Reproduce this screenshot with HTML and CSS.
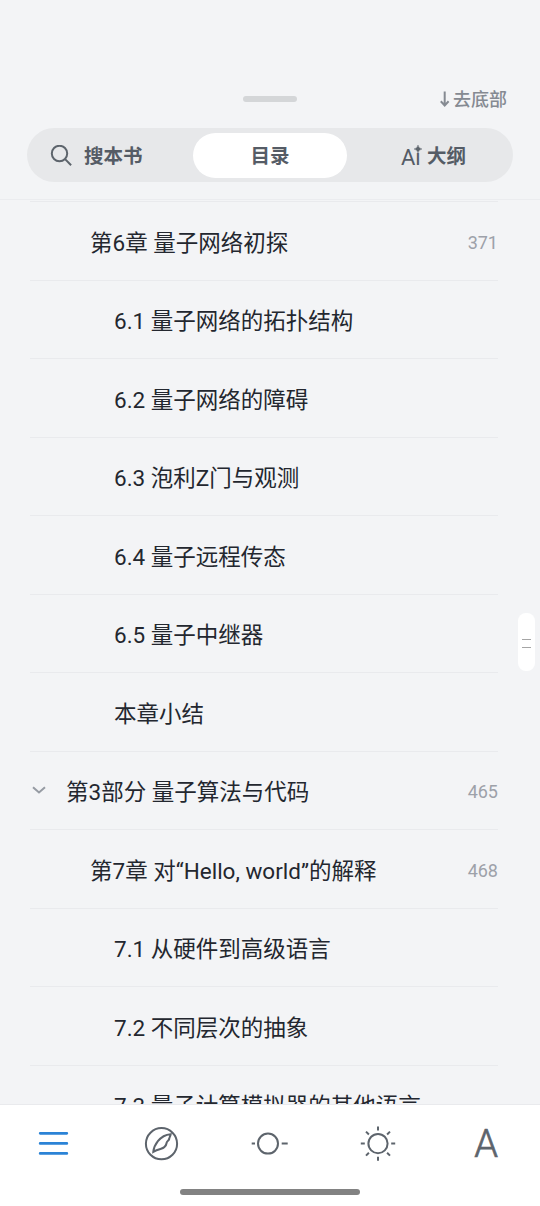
FILE: index.html
```html
<!DOCTYPE html>
<html lang="zh-CN">
<head>
<meta charset="utf-8">
<title>目录</title>
<link rel="stylesheet" href="styles.css">
</head>
<body>
<div class="screen">
  <header class="header">
    <div class="top">
      <span></span>
      <span class="grabber"></span>
      <a class="to-bottom"><svg width="12" height="18" viewBox="0 0 12 18"><path d="M5.7 .5V14M1.8 10.3l3.9 4.2 3.9-4.2"/></svg>去底部</a>
    </div>
    <nav class="tabs">
      <div class="tab tab-search"><svg class="search" width="24" height="24" viewBox="0 0 24 24"><circle cx="10.5" cy="8.5" r="7.7"/><path d="M16.1 14.1l6 6.2"/></svg><span>搜本书</span></div>
      <div class="tab active"><span>目录</span></div>
      <div class="tab tab-outline"><span class="ai">Aı<svg class="spark" width="8" height="8" viewBox="0 0 8 8"><path d="M4 0Q4.6 3.4 8 4Q4.6 4.6 4 8Q3.4 4.6 0 4Q3.4 3.4 4 0Z"/></svg></span><span>大纲</span></div>
    </nav>
  </header>
  <main class="toc">
    <div class="row chapter"><span>第6章 量子网络初探</span><span class="page">371</span></div>
    <div class="row section"><span>6.1 量子网络的拓扑结构</span></div>
    <div class="row section"><span>6.2 量子网络的障碍</span></div>
    <div class="row section"><span>6.3 泡利Z门与观测</span></div>
    <div class="row section"><span>6.4 量子远程传态</span></div>
    <div class="row section"><span>6.5 量子中继器</span></div>
    <div class="row section"><span>本章小结</span></div>
    <div class="row part"><svg class="chevron" width="18" height="12" viewBox="0 0 18 12"><path d="M3 1.2l6 5.3 6-5.3"/></svg><span>第3部分 量子算法与代码</span><span class="page">465</span></div>
    <div class="row chapter"><span>第7章 对“Hello, world”的解释</span><span class="page">468</span></div>
    <div class="row section"><span>7.1 从硬件到高级语言</span></div>
    <div class="row section"><span>7.2 不同层次的抽象</span></div>
    <div class="row section"><span>7.3 量子计算模拟器的其他语言</span></div>
  </main>
  <div class="scroll-thumb"></div>
  <footer class="footer">
    <nav class="tools">
      <div class="tool"><svg class="menu" width="40" height="40" viewBox="0 0 40 40"><path d="M6.2 9.3h26.6M6.2 19.4h26.6M6.2 29.4h26.6"/></svg></div>
      <div class="tool"><svg width="40" height="40" viewBox="0 0 40 40"><circle cx="19.5" cy="19.7" r="15.6"/><path d="M11.3 27.8C11.8 22 17.2 11 28.7 10.2C28.4 12.5 27.2 13.4 27.2 15C26.8 16.8 24.8 16.8 24.6 19C24.3 21 23.8 21.8 22.4 23C20.5 25.3 17 24.3 11.3 27.8Z"/></svg></div>
      <div class="tool"><svg width="40" height="40" viewBox="0 0 40 40"><circle cx="18" cy="19.6" r="10"/><path d="M1.7 19.6h3.3M31.7 19.6h6"/></svg></div>
      <div class="tool"><svg width="40" height="40" viewBox="0 0 40 40"><g transform="translate(0 -.4)"><circle cx="20" cy="20" r="9.6"/><path d="M20 2.8v4M20 33.2v4M2.8 20h4M33.2 20h4M8 8l2.9 2.9M29.1 29.1l2.9 2.9M8 32l2.9-2.9M29.1 10.9L32 8"/></g></svg></div>
      <div class="tool font">A</div>
    </nav>
    <div class="home"></div>
  </footer>
</div>
</body>
</html>
```
FILE: styles.css
```css
* { box-sizing: border-box; }
body {
  margin: 0;
  font-family: Roboto, "Noto Sans CJK SC", sans-serif;
  background: #f3f4f6;
}
svg {
  display: block;
  flex: none;
  fill: none;
  stroke: #5d646c;
  stroke-width: 2;
}
.screen {
  position: relative;
  display: flex;
  flex-direction: column;
  width: 540px;
  height: 1206px;
  overflow: hidden;
}
.header {
  flex: none;
  height: 200px;
  padding: 86px 27px 0;
  border-bottom: 1px solid #ebecef;
}
.top {
  display: grid;
  grid-template-columns: 1fr 54px 1fr;
  grid-template-rows: 25px;
  align-items: center;
  height: 25px;
}
.grabber {
  height: 6px;
  border-radius: 3px;
  background: #d4d6d8;
}
.to-bottom {
  display: flex;
  align-items: center;
  justify-content: flex-end;
  gap: 2px;
  padding: 3px 6px 0 0;
  color: #858a92;
  font-size: 18px;
  font-weight: 500;
  line-height: 24px;
}
.to-bottom svg { stroke: #858a92; }
.tabs {
  display: flex;
  height: 54px;
  margin-top: 17px;
  padding: 5px;
  border-radius: 27px;
  background: #e7e8ea;
}
.tab {
  display: flex;
  flex: none;
  align-items: center;
  width: 161px;
  height: 45px;
  padding-top: 2px;
  color: #555c66;
  font-size: 19.5px;
  font-weight: 700;
  line-height: 28px;
}
.tab-search { padding-left: 17px; gap: 11px; }
.active {
  justify-content: center;
  width: 154px;
  border-radius: 23px;
  background: #fff;
}
.tab-outline { padding-left: 54px; gap: 7px; }
.ai {
  position: relative;
  width: 19px;
  padding-top: 2px;
  font-size: 22px;
  font-weight: 400;
}
.spark {
  position: absolute;
  top: 3px;
  left: 12.5px;
  fill: #5d646c;
  stroke: #5d646c;
  stroke-width: .4;
}
.toc {
  flex: 1;
  min-height: 0;
  margin: 1px 42px 0 30px;
  overflow: hidden;
  border-top: 1px solid #e9eaed;
}
.row {
  display: flex;
  align-items: center;
  height: 78.5px;
  padding-top: 4px;
  border-bottom: 1px solid #e9eaed;
  color: #23272f;
  font-size: 22.5px;
  line-height: 34px;
  white-space: nowrap;
}
.chapter { padding-left: 60px; }
.section { padding-left: 84px; }
.chevron {
  margin-right: 18px;
  stroke: #969ba3;
}
.page {
  margin-left: auto;
  color: #9da1a9;
  font-size: 18px;
}
.scroll-thumb {
  position: absolute;
  top: 613px;
  left: 518px;
  display: flex;
  width: 17px;
  height: 58px;
  border-radius: 8px;
  background: #fff;
}
.scroll-thumb::before {
  width: 9px;
  height: 7px;
  margin: 26px auto 0;
  border-top: 1px solid #a5a5a5;
  border-bottom: 1px solid #a5a5a5;
  content: "";
}
.footer {
  flex: none;
  height: 102px;
  border-top: 1px solid #e9eaed;
  background: #fff;
}
.tools {
  display: grid;
  grid-template-columns: repeat(5, 108px);
  height: 77px;
}
.tool {
  display: flex;
  align-items: center;
  justify-content: center;
}
.tool .menu {
  stroke: #2b83d6;
  stroke-width: 2.8;
  stroke-linecap: round;
}
.font {
  padding-top: 1px;
  color: #5d646c;
  font-size: 38px;
  font-weight: 300;
  -webkit-text-stroke: .7px #5d646c;
}
.home {
  width: 180px;
  height: 6px;
  margin: 7px auto 0;
  border-radius: 3px;
  background: #828282;
}
```
